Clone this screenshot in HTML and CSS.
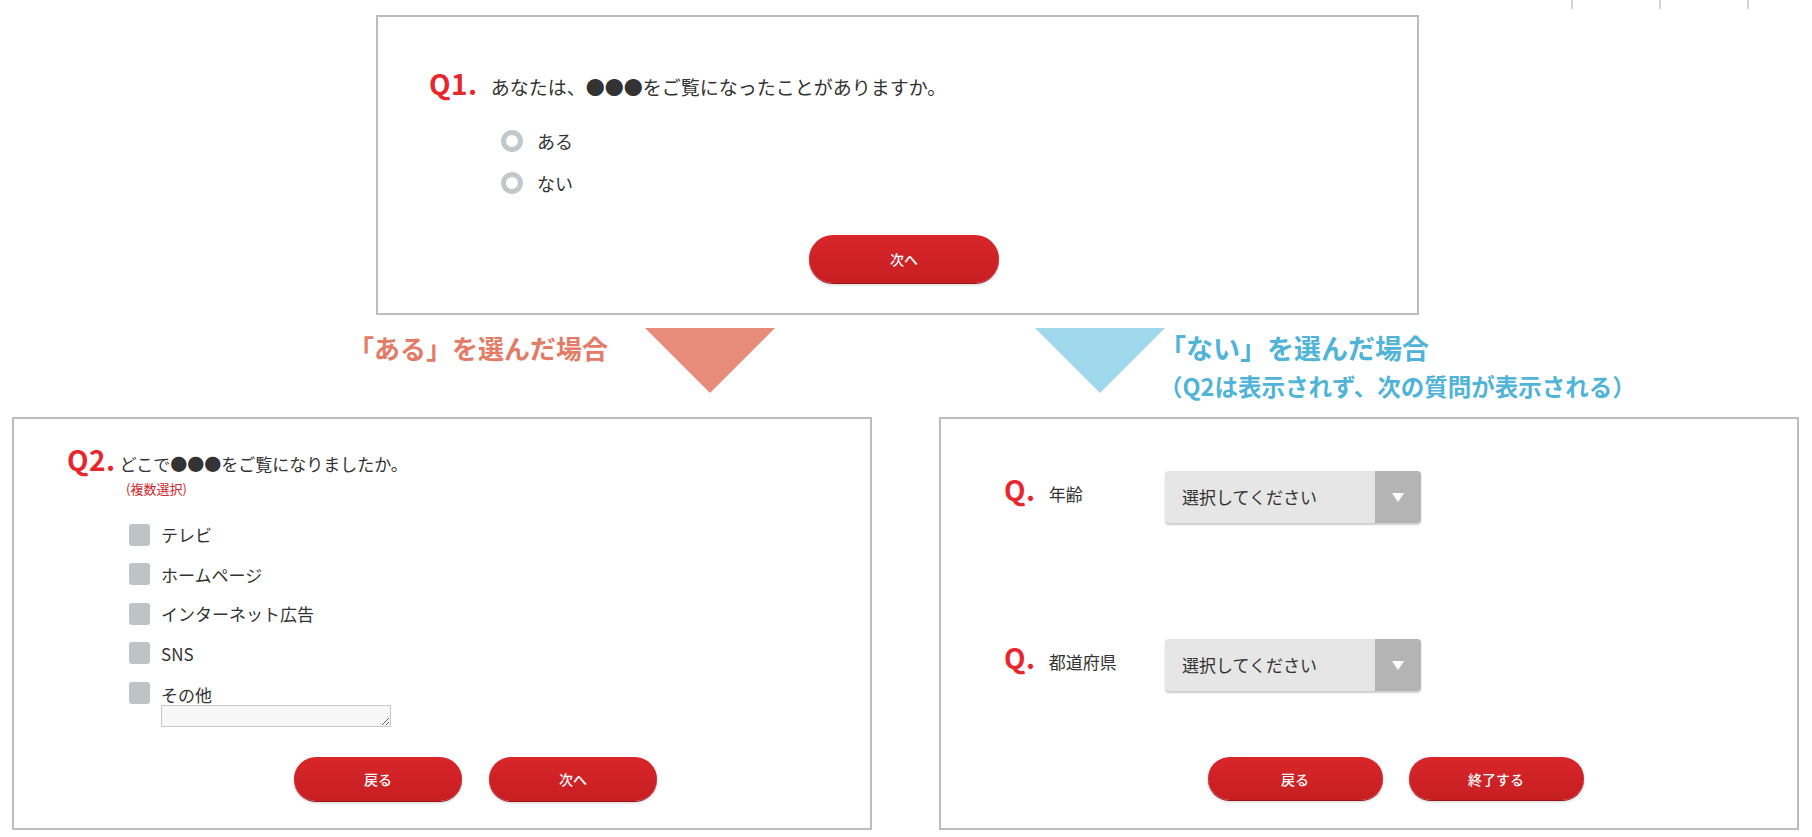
FILE: index.html
```html
<!DOCTYPE html>
<html lang="ja">
<head>
<meta charset="utf-8">
<title>アンケート遷移</title>
<link rel="stylesheet" href="styles.css">
</head>
<body>
<div class="topnav"><span></span><span></span><span></span></div>

<section class="card card-q1">
  <div class="q-head">
    <span class="q-num">Q1.</span>
    <span class="q-text q-text-lg">あなたは、●●●をご覧になったことがありますか。</span>
  </div>
  <ul class="radio-list">
    <li><span class="radio"></span><span class="opt">ある</span></li>
    <li><span class="radio"></span><span class="opt">ない</span></li>
  </ul>
  <div class="btn-row btn-row-q1"><button class="btn btn-q1">次へ</button></div>
</section>

<div class="branches">
  <div class="branch-yes">
    <p class="branch-title title-yes">「ある」を選んだ場合</p>
    <span class="tri tri-yes"></span>
  </div>
  <div class="branch-no">
    <span class="tri tri-no"></span>
    <div class="branch-texts">
      <p class="branch-title title-no">「ない」を選んだ場合</p>
      <p class="branch-sub">（Q2は表示されず、次の質問が表示される）</p>
    </div>
  </div>
</div>

<div class="panels">
  <section class="card card-panel card-q2">
    <div class="q-head q-head-2">
      <span class="q-num q-num-2">Q2.</span>
      <span class="q-text q-text-md">どこで●●●をご覧になりましたか。</span>
    </div>
    <p class="note">(複数選択)</p>
    <ul class="check-list">
      <li><span class="check"></span><span class="opt-sm">テレビ</span></li>
      <li><span class="check"></span><span class="opt-sm">ホームページ</span></li>
      <li><span class="check"></span><span class="opt-sm">インターネット広告</span></li>
      <li><span class="check"></span><span class="opt-sm">SNS</span></li>
      <li class="check-other">
        <span class="check"></span>
        <div class="other-col">
          <span class="opt-sm other-label">その他</span>
          <textarea class="other-input"></textarea>
        </div>
      </li>
    </ul>
    <div class="btn-row btn-row-q2">
      <button class="btn btn-sm">戻る</button>
      <button class="btn btn-sm">次へ</button>
    </div>
  </section>

  <section class="card card-panel card-q3">
    <div class="field-row field-first">
      <div class="field-label"><span class="q-num q-num-plain">Q.</span><span class="field-name">年齢</span></div>
      <div class="select"><span class="select-text">選択してください</span><span class="select-arrow"></span></div>
    </div>
    <div class="field-row field-second">
      <div class="field-label"><span class="q-num q-num-plain">Q.</span><span class="field-name">都道府県</span></div>
      <div class="select"><span class="select-text">選択してください</span><span class="select-arrow"></span></div>
    </div>
    <div class="btn-row btn-row-q3">
      <button class="btn btn-md">戻る</button>
      <button class="btn btn-md">終了する</button>
    </div>
  </section>
</div>
</body>
</html>
```

FILE: styles.css
```css
* { box-sizing: border-box; }

body {
  margin: 0;
  width: 1812px;
  background: #fff;
  color: #333;
  font-family: "Noto Sans CJK JP", "Noto Sans", sans-serif;
}

p, ul { margin: 0; padding: 0; }
ul { list-style: none; }

/* top navigation remnants */
.topnav {
  display: flex;
  justify-content: flex-end;
  height: 9px;
  padding-right: 63px;
}
.topnav span {
  width: 88px;
  height: 9px;
  border-right: 2px solid #d4d4d4;
}

/* cards */
.card {
  border: 2px solid #bdbdbd;
  background: #fff;
}

.card-q1 {
  margin: 6px 0 0 376px;
  width: 1043px;
  height: 300px;
  padding-top: 49px;
}

.q-head {
  display: flex;
  align-items: baseline;
  padding-left: 51px;
}

.q-num {
  color: #e8262c;
  font-weight: 700;
  font-size: 28px;
  line-height: 34px;
  letter-spacing: 0.5px;
  margin-right: 13px;
}
.q-num-2 { margin-right: 4px; }

.q-text { line-height: 34px; }
.q-text-lg { font-size: 19px; }
.q-text-md { font-size: 17px; }

.radio-list {
  margin-top: 16px;
  padding-left: 123px;
}
.radio-list li {
  display: flex;
  align-items: center;
  height: 42px;
}
.radio {
  width: 22px;
  height: 22px;
  border-radius: 50%;
  border: 5px solid #c3c7cb;
  background: #fff;
  margin-right: 14px;
}
.opt { font-size: 18px; }

.btn-row {
  display: flex;
  justify-content: center;
}
.btn-row-q1 {
  margin-top: 31px;
  padding-left: 13px;
}

.btn {
  border: none;
  border-radius: 999px;
  background: linear-gradient(#d8262a, #c71e22);
  color: #fff;
  font-family: "Noto Sans CJK JP", "Noto Sans", sans-serif;
  font-size: 14px;
  font-weight: 500;
  box-shadow: 0 1px 0 #9c1519, 0 2px 3px rgba(0, 0, 0, 0.18);
  padding: 0;
}
.btn-q1 { width: 190px; height: 48px; }
.btn-sm { width: 168px; height: 44px; }
.btn-md { width: 175px; height: 43px; }

/* branch arrows */
.branches {
  display: flex;
  height: 102px;
  padding-top: 13px;
  padding-left: 348px;
}
.branch-yes {
  display: flex;
  width: 427px;
  justify-content: space-between;
}
.branch-no {
  display: flex;
  margin-left: 260px;
}
.branch-title {
  font-size: 26px;
  font-weight: 700;
  line-height: 36px;
  margin-top: 2px;
}
.title-yes { color: #e47b67; }
.title-no { color: #4fb4d7; font-size: 27px; }
.branch-texts { margin-left: -6px; }
.branch-sub {
  color: #4fb4d7;
  font-size: 23.5px;
  font-weight: 700;
  line-height: 30px;
  margin-top: 5px;
}
.tri {
  flex: none;
  width: 0;
  height: 0;
  border-left: 65px solid transparent;
  border-right: 65px solid transparent;
  border-top: 65px solid;
}
.tri-yes { border-top-color: #e78b7b; }
.tri-no { border-top-color: #9ed8ea; }

/* bottom panels */
.panels {
  display: flex;
  gap: 67px;
  padding-left: 12px;
}
.card-panel {
  width: 860px;
  height: 413px;
  display: flex;
  flex-direction: column;
}

.q-head-2 {
  padding: 23px 0 0 53px;
}
.note {
  color: #d3242a;
  font-size: 13px;
  line-height: 16px;
  padding-left: 112px;
}

.check-list {
  margin-top: 18px;
  padding-left: 115px;
}
.check-list li {
  display: flex;
  align-items: center;
  height: 39.5px;
}
.check {
  flex: none;
  width: 21px;
  height: 22px;
  border-radius: 3px;
  background: #bec3c7;
  margin-right: 11px;
}
.opt-sm { font-size: 17px; }

.check-list .check-other {
  align-items: flex-start;
  height: auto;
}
.check-other .check { margin-top: 9px; }
.other-col {
  display: flex;
  flex-direction: column;
  padding-top: 12px;
}
.other-label { line-height: 20px; }
.other-input {
  width: 230px;
  height: 22px;
  margin: 0;
  border: 1px solid #c9c9c9;
  background: #f7f7f7;
  border-radius: 0;
  resize: both;
}

.btn-row-q2 {
  margin-top: auto;
  padding: 0 0 27px 67px;
  gap: 27px;
}

/* right panel */
.field-row {
  display: flex;
  align-items: flex-start;
  padding-left: 63px;
}
.field-first { margin-top: 52px; }
.field-second { margin-top: 116px; }
.field-label {
  display: flex;
  align-items: baseline;
  width: 161px;
  margin-top: 1px;
}
.q-num-plain { margin-right: 13px; }
.field-name { font-size: 17px; }

.select {
  display: flex;
  width: 256px;
  height: 52px;
  border-radius: 4px;
  background: #e6e6e6;
  box-shadow: 0 2px 2px rgba(0, 0, 0, 0.2);
  overflow: hidden;
}
.select-text {
  flex: 1;
  font-size: 17px;
  line-height: 52px;
  padding-left: 17px;
}
.select-arrow {
  width: 46px;
  background: #b4b4b4;
  display: flex;
  align-items: center;
  justify-content: center;
}
.select-arrow::after {
  content: "";
  width: 0;
  height: 0;
  border-left: 6px solid transparent;
  border-right: 6px solid transparent;
  border-top: 9px solid #fff;
}

.btn-row-q3 {
  margin-top: auto;
  padding: 0 0 28px 53px;
  gap: 26px;
}
```
